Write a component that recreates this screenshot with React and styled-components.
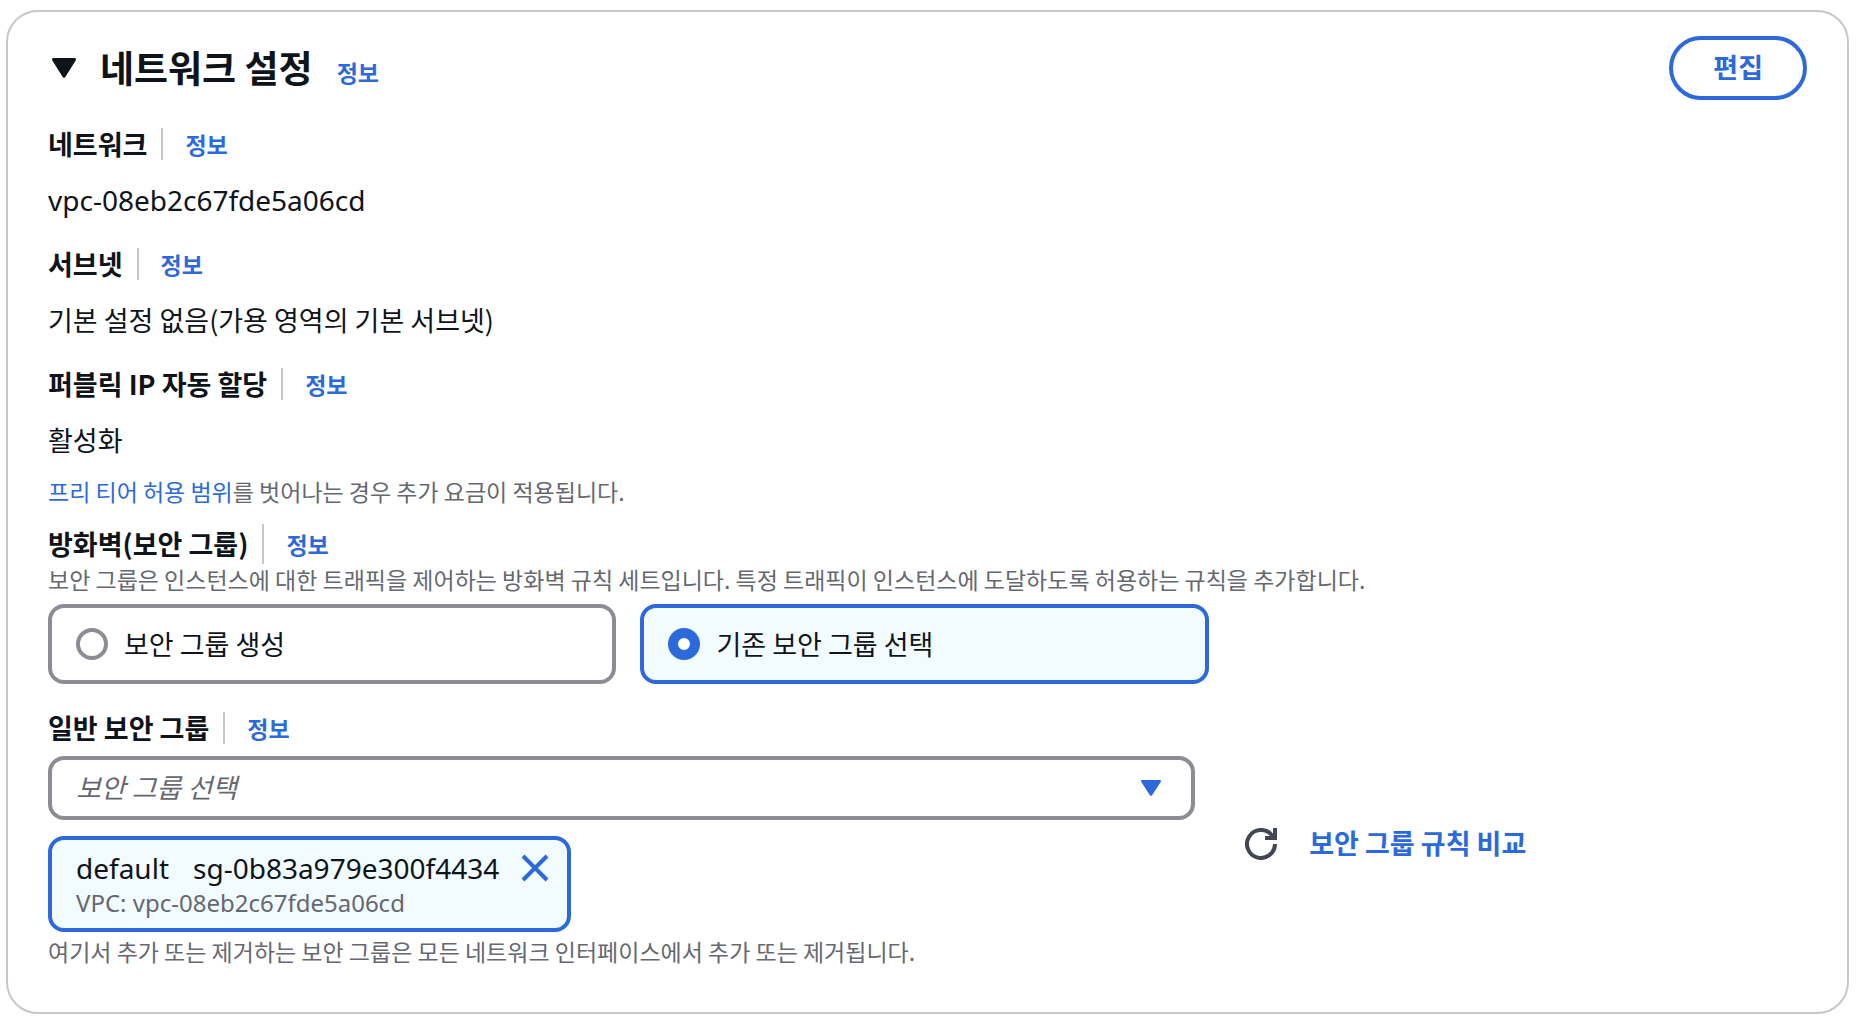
import React, { useState } from 'react';
import styled, { createGlobalStyle } from 'styled-components';

const blue = '#2c69da';
const ink = '#0f141a';
const muted = '#656871';
const line = '#c6c6cd';
const control = '#8c8c94';
const tint = '#f2fbfe';

const GlobalStyle = createGlobalStyle`
  *, *::before, *::after {
    box-sizing: border-box;
  }

  body {
    margin: 0;
    background: #fff;
    color: ${ink};
    font-family: 'Noto Sans CJK KR', 'Noto Sans', sans-serif;
    font-size: 27px;
    line-height: 40px;
  }

  button, select, input {
    font: inherit;
    color: inherit;
  }
`;

const Panel = styled.section`
  margin: 10px 9px 10px 6px;
  padding: 24px 40px 44px;
  border: 2px solid ${line};
  border-radius: 32px;
`;

const Header = styled.header`
  display: flex;
  align-items: center;
  height: 64px;
  margin-bottom: 24px;
`;

const Toggle = styled.button`
  display: flex;
  align-items: center;
  gap: 24px;
  padding: 0 0 0 4px;
  border: 0;
  background: none;
  cursor: pointer;
`;

const Title = styled.h2`
  margin: 0;
  padding-bottom: 2px;
  font-size: 37px;
  line-height: 48px;
  font-weight: 700;
`;

const InfoLink = styled.a`
  color: ${blue};
  font-size: 23px;
  line-height: 32px;
  font-weight: 700;
  text-decoration: none;
`;

const HeaderInfo = styled(InfoLink)`
  margin: 8px auto 0 24px;
`;

const EditButton = styled.button`
  height: 64px;
  padding: 0 40px 2px;
  border: 4px solid ${blue};
  border-radius: 32px;
  background: #fff;
  color: ${blue};
  font-weight: 700;
  cursor: pointer;
`;

const Summary = styled.dl`
  display: flex;
  flex-direction: column;
  gap: 24px;
  margin: 0 0 16px;
`;

const SummaryItem = styled.div`
  display: flex;
  flex-direction: column;
  gap: 16px;
`;

const Term = styled.dt`
  display: flex;
  align-items: center;
  font-weight: 700;
`;

const Value = styled.dd`
  margin: 0;
`;

const ResourceId = styled.span`
  display: block;
  font-family: 'Noto Sans', sans-serif;
  font-size: ${(props) => (props.$small ? '24px' : '28px')};
`;

const Divider = styled.span`
  width: 2px;
  height: ${(props) => (props.$tall ? '40px' : '32px')};
  margin: 0 22px 0 14px;
  background: ${line};
`;

const Hint = styled.p`
  margin: 0;
  padding-bottom: 2px;
  color: ${muted};
  font-size: 23px;
  line-height: 30px;
`;

const HintLink = styled.a`
  color: ${blue};
  text-decoration: none;
`;

const Fieldset = styled.fieldset`
  min-width: 0;
  margin: 16px 0 24px;
  padding: 0;
  border: 0;
`;

const Legend = styled.legend`
  display: flex;
  align-items: center;
  padding: 0;
  font-weight: 700;
`;

const Tiles = styled.div`
  display: grid;
  grid-template-columns: 1fr 1fr;
  gap: 24px;
  width: 66%;
  margin-top: 8px;
`;

const Tile = styled.label`
  display: flex;
  align-items: center;
  gap: 16px;
  height: 80px;
  padding: 0 24px;
  border: 4px solid ${(props) => (props.$selected ? blue : control)};
  border-radius: 16px;
  background: ${(props) => (props.$selected ? tint : '#fff')};
  cursor: pointer;
`;

const Radio = styled.input`
  appearance: none;
  flex: none;
  width: 32px;
  height: 32px;
  margin: 0;
  border: 4px solid ${control};
  border-radius: 50%;
  background: #fff;

  &:checked {
    border: 10px solid ${blue};
  }
`;

const LabelRow = styled.div`
  display: flex;
  align-items: center;
  margin-bottom: 8px;
  font-weight: 700;
`;

const GroupRow = styled.div`
  display: grid;
  grid-template-columns: 15fr 8fr;
  align-items: center;
  margin-bottom: 4px;
`;

const Picker = styled.div`
  display: flex;
  flex-direction: column;
  align-items: flex-start;
  gap: 16px;
`;

const SelectBox = styled.div`
  display: grid;
  align-items: center;
  width: 100%;

  > * {
    grid-area: 1 / 1;
  }

  svg {
    justify-self: end;
    margin-right: 34px;
    pointer-events: none;
  }
`;

const Select = styled.select`
  appearance: none;
  width: 100%;
  height: 64px;
  padding: 0 64px 2px 24px;
  border: 4px solid ${control};
  border-radius: 16px;
  background: #fff;
  color: ${muted};
  font-style: italic;
`;

const Token = styled.div`
  display: flex;
  align-items: flex-start;
  gap: 20px;
  padding: 8px 16px 8px 24px;
  border: 4px solid ${blue};
  border-radius: 16px;
  background: ${tint};
`;

const TokenName = styled.div`
  display: flex;
  gap: 24px;
`;

const IconButton = styled.button`
  display: flex;
  align-items: center;
  justify-content: center;
  width: 32px;
  height: 40px;
  padding: 0;
  border: 0;
  background: none;
  cursor: pointer;
`;

const Actions = styled.div`
  display: flex;
  align-items: center;
  gap: 32px;
  padding-left: 50px;
`;

const CompareLink = styled.a`
  padding-bottom: 2px;
  color: ${blue};
  font-weight: 700;
  text-decoration: none;
`;

const Caret = ({ width, height, color }) => (
  <svg width={width} height={height} viewBox="0 0 24 20" preserveAspectRatio="none" aria-hidden="true">
    <path d="M1.500 0h21a1.500 1.500 0 0 1 1.300 2.300L13.300 19a1.500 1.500 0 0 1-2.600 0L.2 2.300A1.500 1.500 0 0 1 1.500 0z" fill={color} />
  </svg>
);

const CloseIcon = () => (
  <svg width="28" height="28" viewBox="0 0 28 28" fill="none" stroke={blue} strokeWidth="4" aria-hidden="true">
    <path d="M2 2l24 24M26 2L2 26" />
  </svg>
);

const RefreshIcon = () => (
  <svg width="32" height="32" viewBox="0 0 32 32" fill="none" stroke="#424650" strokeWidth="4" aria-hidden="true">
    <path d="M30 16a14 14 0 1 1-3.500-9.300L29 10" />
    <path d="M30 0v10H20" />
  </svg>
);

const summary = [
  { label: '네트워크', value: <ResourceId>vpc-08eb2c67fde5a06cd</ResourceId> },
  { label: '서브넷', value: '기본 설정 없음(가용 영역의 기본 서브넷)' },
  { label: '퍼블릭 IP 자동 할당', value: '활성화' },
];

const modes = [
  { id: 'create', label: '보안 그룹 생성' },
  { id: 'existing', label: '기존 보안 그룹 선택' },
];

const App = () => {
  const [mode, setMode] = useState('existing');

  return (
    <>
      <GlobalStyle />
      <Panel>
        <Header>
          <Toggle type="button" aria-expanded="true">
            <Caret width={24} height={20} color={ink} />
            <Title>네트워크 설정</Title>
          </Toggle>
          <HeaderInfo href="#info">정보</HeaderInfo>
          <EditButton type="button">편집</EditButton>
        </Header>

        <Summary>
          {summary.map((item) => (
            <SummaryItem key={item.label}>
              <Term>
                {item.label}
                <Divider />
                <InfoLink href="#info">정보</InfoLink>
              </Term>
              <Value>{item.value}</Value>
            </SummaryItem>
          ))}
        </Summary>
        <Hint>
          <HintLink href="#free-tier">프리 티어 허용 범위</HintLink>를 벗어나는 경우 추가 요금이 적용됩니다.
        </Hint>

        <Fieldset>
          <Legend>
            방화벽(보안 그룹)
            <Divider $tall />
            <InfoLink href="#info">정보</InfoLink>
          </Legend>
          <Hint>
            보안 그룹은 인스턴스에 대한 트래픽을 제어하는 방화벽 규칙 세트입니다. 특정 트래픽이 인스턴스에 도달하도록 허용하는 규칙을 추가합니다.
          </Hint>
          <Tiles>
            {modes.map(({ id, label }) => (
              <Tile key={id} $selected={mode === id}>
                <Radio type="radio" name="mode" checked={mode === id} onChange={() => setMode(id)} />
                {label}
              </Tile>
            ))}
          </Tiles>
        </Fieldset>

        <LabelRow>
          <label htmlFor="group">일반 보안 그룹</label>
          <Divider />
          <InfoLink href="#info">정보</InfoLink>
        </LabelRow>
        <GroupRow>
          <Picker>
            <SelectBox>
              <Select id="group" defaultValue="">
                <option value="">보안 그룹 선택</option>
              </Select>
              <Caret width={20} height={16} color={blue} />
            </SelectBox>
            <Token>
              <div>
                <TokenName>
                  <ResourceId>default</ResourceId>
                  <ResourceId>sg-0b83a979e300f4434</ResourceId>
                </TokenName>
                <Hint as="div">
                  <ResourceId $small>VPC: vpc-08eb2c67fde5a06cd</ResourceId>
                </Hint>
              </div>
              <IconButton type="button" aria-label="default 제거">
                <CloseIcon />
              </IconButton>
            </Token>
          </Picker>
          <Actions>
            <IconButton type="button" aria-label="새로 고침">
              <RefreshIcon />
            </IconButton>
            <CompareLink href="#compare">보안 그룹 규칙 비교</CompareLink>
          </Actions>
        </GroupRow>
        <Hint>여기서 추가 또는 제거하는 보안 그룹은 모든 네트워크 인터페이스에서 추가 또는 제거됩니다.</Hint>
      </Panel>
    </>
  );
};

export default App;
